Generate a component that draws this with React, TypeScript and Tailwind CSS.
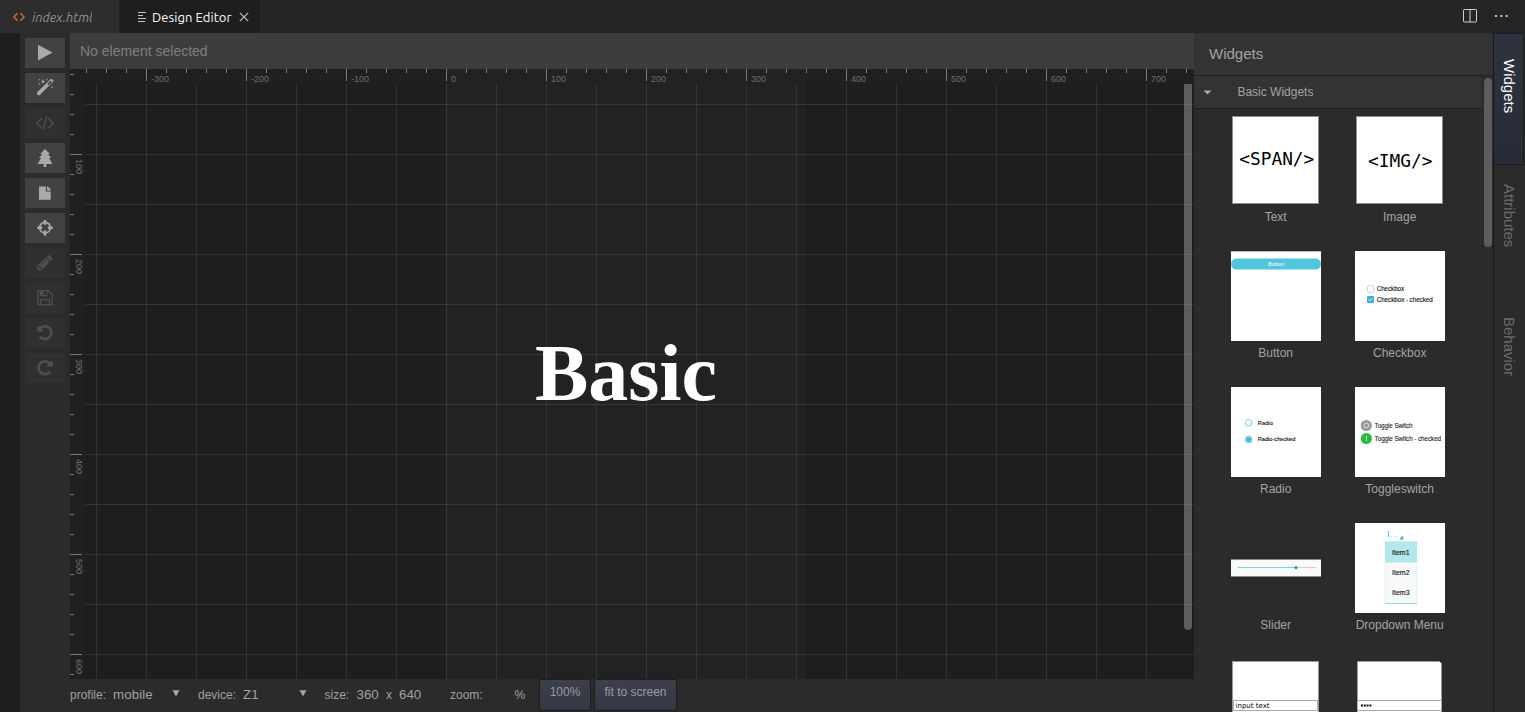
import type { ReactNode } from "react";

const UNDO =
  "M1536 896q0 156-61 298t-164 245-245 164-298 61q-172 0-327-72.5t-264-204.5q-7-10-6.5-22.5t8.5-20.5l137-138q10-9 25-9 16 2 23 12 73 95 179 147t225 52q104 0 198.5-40.5t163.5-109.5 109.5-163.5 40.5-198.5-40.5-198.5-109.5-163.5-163.5-109.5-198.5-40.5q-98 0-188 35.5t-160 101.5l137 138q31 30 14 69-17 40-59 40h-448q-26 0-45-19t-19-45v-448q0-42 40-59 39-17 69 14l130 129q107-101 244.5-156.5t284.5-55.5q156 0 298 61t245 164 164 245 61 298z";
const PENCIL =
  "M491 1536l91-91-235-235-91 91v107h128v128h107zm523-928q0-22-22-22-10 0-17 7l-542 542q-7 7-7 17 0 22 22 22 10 0 17-7l542-542q7-7 7-17zm-54-192l416 416-832 832h-416v-416zm683 96q0 53-37 90l-166 166-416-416 166-165q36-38 90-38 53 0 91 38l235 234q37 39 37 91z";
const FLOPPY =
  "M512 1536h768v-384h-768v384zm896 0h128v-896q0-14-10-38.5t-20-34.5l-281-281q-10-10-34-20t-39-10v416q0 40-28 68t-68 28h-576q-40 0-68-28t-28-68v-416h-128v1280h128v-416q0-40 28-68t68-28h832q40 0 68 28t28 68v416zm-384-928v-320q0-13-9.5-22.5t-22.5-9.5h-192q-13 0-22.5 9.5t-9.5 22.5v320q0 13 9.5 22.5t22.5 9.5h192q13 0 22.5-9.5t9.5-22.5zm640 32v928q0 40-28 68t-68 28h-1344q-40 0-68-28t-28-68v-1344q0-40 28-68t68-28h928q40 0 88 20t76 48l280 280q28 28 48 76t20 88z";

type Tool = { name: string; enabled: boolean; icon: ReactNode };

/* Each icon is drawn on the 40x30 face of its button. */
const tools: Tool[] = [
  { name: "Play", enabled: true, icon: <path d="M13 6.7v15.8l14.5-7.9z" fill="currentColor" /> },
  {
    name: "Effects",
    enabled: true,
    icon: (
      <g fill="currentColor">
        <path
          fillRule="evenodd"
          d="M12.2 19.3 25.4 6.2q.9-.8 1.8 0l.8.8q.8.9 0 1.8L14.8 22q-.9.8-1.8 0l-.8-.8q-.8-.9 0-1.9zm10-8.3 1.3 1.3 3.4-3.4-1.3-1.3z"
        />
        <path d="m18 6 .7 1.9 1.9.6-1.9.7-.7 1.9-.7-1.9-1.9-.7 1.9-.6zM14.3 5.5l.3.9.9.3-.9.4-.3.9-.3-.9-.9-.4.9-.3zM14.3 9.7l.3.9.9.3-.9.4-.3.9-.3-.9-.9-.4.9-.3zM22 5.5l.3.9.9.3-.9.4-.3.9-.3-.9-.9-.4.9-.3zM27 12.8l.4.9.9.4-.9.3-.4.9-.3-.9-.9-.3.9-.4z" />
      </g>
    ),
  },
  {
    name: "Source",
    enabled: false,
    icon: (
      <path d="m17 10-5.2 5.2 5.2 5.3M23 10l5.2 5.2-5.2 5.3M21.7 8.8l-3.4 12.7" fill="none" stroke="currentColor" strokeWidth="1.4" />
    ),
  },
  {
    name: "Structure",
    enabled: true,
    icon: (
      <path d="m20 6-4.8 5h2l-3.2 4h2.1l-3.5 6h6.1v3h2.7v-3h6.1L24 15h2.1L23 11h2z" fill="currentColor" />
    ),
  },
  {
    name: "New page",
    enabled: true,
    icon: <path d="M14 8.5h6.9v5h4.8v8.3H14zM22 8.5h.9l2.8 3.1v.8H22z" fill="currentColor" />,
  },
  {
    name: "Locate",
    enabled: true,
    icon: (
      <g fill="none" stroke="currentColor">
        <circle cx="20" cy="14.7" r="5.4" strokeWidth="1.7" />
        <path d="M20 7v4.8M20 17.6v4.8M12.3 14.7h4.8M22.9 14.7h4.8" strokeWidth="2.6" />
      </g>
    ),
  },
  { name: "Edit", enabled: false, icon: <path transform="translate(11 5.5) scale(.01005)" d={PENCIL} fill="currentColor" /> },
  { name: "Save", enabled: false, icon: <path transform="translate(11 5.6) scale(.01005)" d={FLOPPY} fill="currentColor" /> },
  { name: "Undo", enabled: false, icon: <path transform="translate(12.2 5.7) scale(.01005)" d={UNDO} fill="currentColor" /> },
  { name: "Redo", enabled: false, icon: <path transform="translate(27.7 5.7) scale(-.01005 .01005)" d={UNDO} fill="currentColor" /> },
];

function TabBar() {
  return (
    <header className="flex h-[33px] shrink-0 bg-[#252525] font-['Ubuntu','Noto_Sans',sans-serif] text-[13px]">
      <div className="flex w-[120px] items-center border-r border-[#252525] bg-[#2d2d2d] pl-[13px]">
        <svg width="12" height="10" viewBox="0 0 12 10" fill="none" stroke="#cf6d33" strokeWidth="1.4">
          <path d="M4.5 1.2.9 5l3.6 3.8M7.5 1.2 11.1 5 7.5 8.8" />
        </svg>
        <span className="ml-[7px] w-[60px] overflow-hidden whitespace-nowrap text-[13px] italic leading-5 text-[#929292]">index.html</span>
      </div>
      <div className="flex w-[140px] items-center bg-[#1e1e1e] pl-[18px]">
        <svg width="9" height="10" viewBox="0 0 9 10" stroke="#c5c5c5" strokeWidth="1" className="shrink-0">
          <path d="M0 .5h8M0 3.5h5M0 6.5h8M0 9.5h7" />
        </svg>
        <span className="ml-[5px] w-[80px] whitespace-nowrap text-[13px] leading-5 tracking-[0.07px] text-white">Design Editor</span>
        <svg width="10" height="10" viewBox="0 0 10 10" stroke="#c5c5c5" strokeWidth="1.1" className="ml-[7px]">
          <path d="m.8.8 8.4 8.4M9.2.8.8 9.2" />
        </svg>
      </div>
      <div className="ml-auto flex items-center gap-[18px] pr-[17px]">
        <svg width="14" height="14" viewBox="0 0 14 14" fill="none" stroke="#d8c4dc" className="mb-px">
          <rect x=".5" y=".5" width="13" height="12.5" rx=".7" />
          <path d="M7 1v12" />
        </svg>
        <svg width="13" height="3" viewBox="0 0 13 3" fill="#c5c5c5">
          <path d="M0 0h2v2H0zM5.3 0h2v2h-2zM10.6 0h2v2h-2z" />
        </svg>
      </div>
    </header>
  );
}

function Toolbar() {
  return (
    <div className="flex w-[50px] shrink-0 flex-col gap-[5px] bg-[#2b2b2b] px-[5px] pt-[5px]">
      {tools.map((t) => (
        <button
          key={t.name}
          aria-label={t.name}
          className={t.enabled ? "h-[30px] w-10 bg-[#424242] text-[#a9a9a9]" : "h-[30px] w-10 bg-[#303030] text-[#4f4f4f]"}
        >
          <svg width="40" height="30" viewBox="0 0 40 30">{t.icon}</svg>
        </button>
      ))}
    </div>
  );
}

const range = (n: number) => Array.from({ length: n }, (_, i) => i);

function Stage() {
  return (
    <div className="relative h-[610px] bg-[#1e1e1e]">
      <svg width="1124" height="610" className="absolute inset-0" shapeRendering="crispEdges">
        <rect width="1124" height="15" fill="#202020" />
        <rect width="15" height="610" fill="#202020" />
        <rect x="376" y="0" width="360" height="610" fill="#222222" />
        {range(56).map((i) => {
          const x = 16 + i * 20;
          return <rect key={x} x={x} y="0" width="1" height={i % 5 === 3 ? 12 : 4} fill="#767a84" />;
        })}
        {range(31).map((i) => {
          const y = 5 + i * 20;
          return <rect key={y} x="0" y={y} width={i % 5 === 4 ? 12 : 4} height="1" fill="#767a84" />;
        })}
        <g fill="#6c6f77" fontFamily="Liberation Sans, Arial, sans-serif" fontSize="9">
          {range(11).map((i) => (
            <text key={i} x={81 + i * 100} y="13">{i * 100 - 300}</text>
          ))}
          {range(6).map((i) => (
            <text key={i} transform={`translate(5.5 ${90 + i * 100}) rotate(90)`}>{(i + 1) * 100}</text>
          ))}
        </g>
      </svg>
      <div className="absolute left-[376px] top-0 w-[360px] pt-[258px] text-center font-['Liberation_Serif',serif] text-[80px] font-bold leading-[92px] text-white">
        Basic
      </div>
      <div className="absolute right-[2px] top-[15px] h-[546px] w-2 rounded-b-[4px] bg-[#5d5d5e]" />
      <svg width="1124" height="610" className="pointer-events-none absolute inset-0" shapeRendering="crispEdges" fill="#fff" fillOpacity=".09">
        {range(22).map((i) => (
          <rect key={i} x={26 + i * 50} y="15" width="1" height="595" />
        ))}
        {range(12).map((i) => (
          <rect key={i} x="15" y={35 + i * 50} width="1109" height="1" />
        ))}
      </svg>
    </div>
  );
}

function StatusBar() {
  const button =
    "h-8 rounded-[3px] border border-[#1b1d23] bg-linear-to-b from-[#3d404c] to-[#343842] pb-[6px] text-center text-xs leading-[24px] text-[#969ba6]";
  return (
    <footer className="flex h-[33px] bg-[#2b2b2b] text-xs leading-[32px] text-[#a0a0a0]">
      <span className="w-[43px]">profile:</span>
      <span className="w-[59px] text-[13.33px] tracking-[0.1px]">mobile</span>
      <svg width="26" height="20" className="shrink-0" fill="#a6a6a6"><path d="M.5 11.3h7L4 17.5z" /></svg>
      <span className="w-[45px]">device:</span>
      <span className="w-[56px] text-[13.33px]">Z1</span>
      <svg width="25.5" height="20" className="shrink-0" fill="#a6a6a6"><path d="M.5 11.3h7L4 17.5z" /></svg>
      <span className="w-[32px]">size:</span>
      <span className="w-[29.5px] text-[13.33px]">360</span>
      <span className="w-[13px]">x</span>
      <span className="w-[51px] text-[13.33px]">640</span>
      <span className="w-[64.5px]">zoom:</span>
      <span className="w-[24.5px]">%</span>
      <button className={`${button} w-[52px]`}>100%</button>
      <button className={`${button} ml-[3px] w-[83px]`}>fit to screen</button>
    </footer>
  );
}

function Thumb({ children }: { children: ReactNode }) {
  return (
    <svg width="90" height="90" viewBox="0 0 90 90" className="block" fontFamily="Liberation Sans, Arial, sans-serif">
      {children}
    </svg>
  );
}

const Paper = () => <rect width="90" height="90" fill="#fff" />;
const MONO = "DejaVu Sans Mono, monospace";

const widgets: { name: string; hasCaption?: boolean; art: ReactNode }[] = [
  {
    name: "Text",
    art: (
      <>
        <rect x="1.5" y="1.5" width="86" height="87" fill="#fff" stroke="#8a8a8a" strokeWidth=".8" />
        <text x="8.3" y="50" fontFamily={MONO} fontSize="17.5" textLength="75" lengthAdjust="spacingAndGlyphs">{"<SPAN/>"}</text>
      </>
    ),
  },
  {
    name: "Image",
    art: (
      <>
        <rect x="1.5" y="1.5" width="86" height="87" fill="#fff" stroke="#8a8a8a" strokeWidth=".8" />
        <text x="13" y="52.3" fontFamily={MONO} fontSize="17.5" textLength="64.4" lengthAdjust="spacingAndGlyphs">{"<IMG/>"}</text>
      </>
    ),
  },
  {
    name: "Button",
    art: (
      <>
        <Paper />
        <rect width="90" height="1" fill="#bbb" />
        <rect y="7.5" width="90" height="11" rx="5.5" fill="#52c6da" />
        <text x="45" y="15" fontSize="5.6" fill="#fff" textAnchor="middle">Button</text>
      </>
    ),
  },
  {
    name: "Checkbox",
    art: (
      <>
        <Paper />
        <rect x="12.5" y="34.5" width="6" height="7" rx=".8" fill="#fff" stroke="#a8dce5" strokeWidth=".8" />
        <rect x="12" y="45" width="7" height="7" rx=".8" fill="#3bb5cb" />
        <path d="m13.4 48.5 1.4 1.4 2.7-2.9" fill="none" stroke="#fff" strokeWidth=".8" />
        <g fontSize="6.3" fill="#111" stroke="#111" strokeWidth=".12">
          <text x="21.7" y="40.2" textLength="27.5">Checkbox</text>
          <text x="21.7" y="50.6" textLength="56">Checkbox - checked</text>
        </g>
      </>
    ),
  },
  {
    name: "Radio",
    art: (
      <>
        <Paper />
        <circle cx="17.7" cy="35.7" r="3.3" fill="#eef8fa" stroke="#6ecbd9" strokeWidth=".8" />
        <circle cx="17.7" cy="52.5" r="3.3" fill="#3bb5cb" stroke="#6ecbd9" strokeWidth=".8" />
        <circle cx="17.7" cy="52.5" r="2.2" fill="none" stroke="#b4e5ed" strokeWidth=".5" />
        <g fontSize="5.7" fill="#111" stroke="#111" strokeWidth=".12">
          <text x="26.8" y="37.5" textLength="15">Radio</text>
          <text x="26.8" y="54.4" textLength="37.5">Radio-checked</text>
        </g>
      </>
    ),
  },
  {
    name: "Toggleswitch",
    art: (
      <>
        <Paper />
        <circle cx="11.3" cy="38.5" r="5.6" fill="#999" />
        <circle cx="11.3" cy="38.5" r="2.4" fill="none" stroke="#e5e5e5" strokeWidth=".9" />
        <circle cx="11.3" cy="51.5" r="5.6" fill="#2bb841" />
        <path d="M11.5 49v5" stroke="#d7f3db" />
        <g fontSize="6.3" fill="#222" stroke="#222" strokeWidth=".1">
          <text x="19.6" y="40.9" textLength="38">Toggle Switch</text>
          <text x="19.6" y="53.9" textLength="66.5">Toggle Switch - checked</text>
        </g>
      </>
    ),
  },
  {
    name: "Slider",
    art: (
      <>
        <rect y="36.2" width="90" height="17.5" fill="#fafafa" />
        <path d="M0 36.5h90M0 53.5h90" stroke="#8a8a8a" />
        <path d="M65 44.5h20" stroke="#d0d0d0" />
        <path d="M7 44.5h58" stroke="#72d4df" />
        <circle cx="65" cy="44.5" r="1.6" fill="#1396d1" />
      </>
    ),
  },
  {
    name: "Dropdown Menu",
    art: (
      <>
        <Paper />
        <path d="M33.5 8v6" stroke="#52c6da" />
        <path d="M36 13.3h7" stroke="#98dce5" strokeDasharray="1 1.5" />
        <path d="M48.2 12.5v4h-4z" fill="#18b4c9" />
        <rect x="30" y="18.5" width="32" height="62" fill="#f8f9f9" stroke="#d8f0f3" strokeWidth=".7" />
        <rect x="30" y="18.5" width="32" height="21" fill="#b4e7ec" />
        <path d="M30 80.5h32" stroke="#92d6df" />
        <g fontSize="7" fill="#111" stroke="#111" strokeWidth=".12" textAnchor="middle">
          <text x="45.8" y="32">Item1</text>
          <text x="45.8" y="52.2">Item2</text>
          <text x="45.8" y="72.3">Item3</text>
        </g>
      </>
    ),
  },
  {
    name: "Text Input",
    hasCaption: false,
    art: (
      <>
        <rect x="1.5" y="2.5" width="86" height="87" fill="#fff" stroke="#999" />
        <rect x="2.5" y="41.5" width="84" height="10" fill="#fff" stroke="#aaa" />
        <text x="4.5" y="49.2" fontFamily="DejaVu Sans, sans-serif" fontSize="7">input text</text>
      </>
    ),
  },
  {
    name: "Password",
    hasCaption: false,
    art: (
      <>
        <path d="M2.5 90V2.5h82l2 2V90z" fill="#fff" stroke="#999" />
        <rect x="2.5" y="41.5" width="84" height="10" fill="#fff" stroke="#aaa" />
        <path d="M6 46.5h10.5" stroke="#111" strokeWidth="2" strokeDasharray="2 .8" />
      </>
    ),
  },
];

function WidgetPanel() {
  return (
    <aside className="flex w-[299px] shrink-0 flex-col overflow-hidden bg-[#2b2b2b] text-[#a3a3a3]">
      <h2 className="h-[43px] shrink-0 border-b border-[#222] bg-[#333] pl-[15px] text-[15px] leading-[42px]">Widgets</h2>
      <div className="flex min-h-0 flex-1">
        <div className="w-[288px]">
          <div className="flex h-[33px] items-center border-b border-[#1e1e1e] bg-[#333] pl-[9px] text-xs">
            <svg width="9" height="5" viewBox="0 0 9 5" fill="#aaa"><path d="M.5.5h8l-4 4z" /></svg>
            <span className="ml-[25.4px] pb-px">Basic Widgets</span>
          </div>
          <div className="grid grid-cols-[124px_124px] pl-5 pt-[6px]">
            {widgets.map((w) => (
              <figure key={w.name} className="flex h-[136px] flex-col items-center">
                <Thumb>{w.art}</Thumb>
                {w.hasCaption !== false && <figcaption className="mt-1 pr-[0.6px] text-xs leading-4">{w.name}</figcaption>}
              </figure>
            ))}
          </div>
        </div>
        <div className="ml-[2px] mt-[2px] h-[169px] w-2 rounded-full bg-[#5d5d5e]" />
      </div>
    </aside>
  );
}

function SideTabs() {
  return (
    <nav className="flex w-8 shrink-0 flex-col border-l border-[#191919] bg-[#2b2b2b] text-[15px] text-[#696c73]">
      <div className="flex h-[132px] w-[30px] rounded-tr-[3px] border-b border-r border-t border-[#1a1c21] bg-linear-to-b from-[#2e333d] to-[#262b35] pt-[25px] text-white [writing-mode:vertical-rl]">
        <span className="h-[106px] leading-[28px]">Widgets</span>
      </div>
      <div className="h-[133px] w-[30px] pt-[19px] leading-[30px] [writing-mode:vertical-rl]">Attributes</div>
      <div className="w-[30px] pt-[18.5px] leading-[30px] [writing-mode:vertical-rl]">Behavior</div>
    </nav>
  );
}

export default function App() {
  return (
    <div className="flex h-[712px] w-[1525px] flex-col overflow-hidden bg-[#1e1e1e] font-['Liberation_Sans',Arial,sans-serif]">
      <TabBar />
      <main className="flex min-h-0 flex-1 pl-5">
        <Toolbar />
        <section className="flex w-[1124px] shrink-0 flex-col">
          <div className="h-9 bg-[#3d3d3d] pl-[10px] text-sm leading-9 text-[#7e7e7e]">No element selected</div>
          <Stage />
          <StatusBar />
        </section>
        <WidgetPanel />
        <SideTabs />
      </main>
    </div>
  );
}
